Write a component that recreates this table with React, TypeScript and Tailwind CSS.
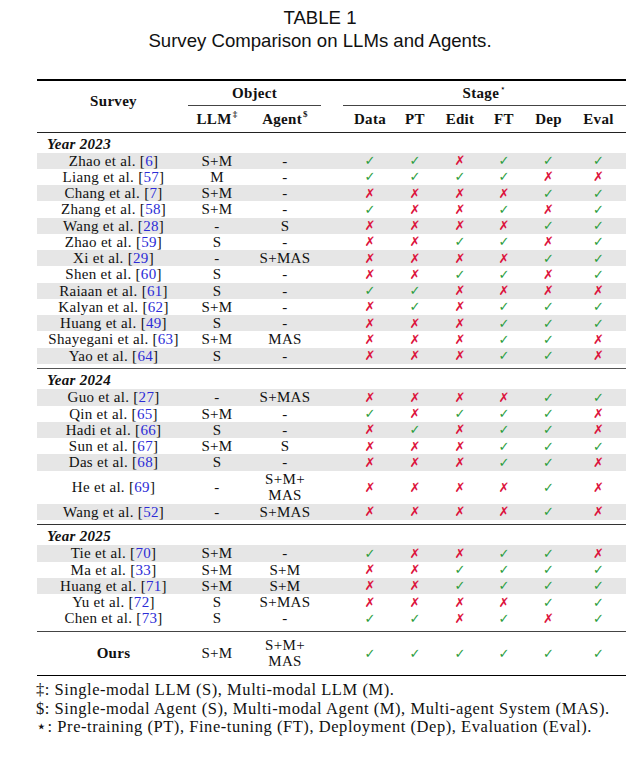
import React from "react";

type Row = {
  name: string;
  ref: string;
  llm: string;
  agent: string[];
  s: string;
  shade: boolean;
  tall?: boolean;
};

const COLS = "grid grid-cols-[153px_54px_82px_22px_44px_46px_44px_44px_45px_55px]";

const y2023: Row[] = [
  { name: "Zhao et al.", ref: "6", llm: "S+M", agent: ["-"], s: "110111", shade: true },
  { name: "Liang et al.", ref: "57", llm: "M", agent: ["-"], s: "111100", shade: false },
  { name: "Chang et al.", ref: "7", llm: "S+M", agent: ["-"], s: "000011", shade: true },
  { name: "Zhang et al.", ref: "58", llm: "S+M", agent: ["-"], s: "100101", shade: false },
  { name: "Wang et al.", ref: "28", llm: "-", agent: ["S"], s: "000011", shade: true },
  { name: "Zhao et al.", ref: "59", llm: "S", agent: ["-"], s: "001101", shade: false },
  { name: "Xi et al.", ref: "29", llm: "-", agent: ["S+MAS"], s: "000011", shade: true },
  { name: "Shen et al.", ref: "60", llm: "S", agent: ["-"], s: "001101", shade: false },
  { name: "Raiaan et al.", ref: "61", llm: "S", agent: ["-"], s: "110000", shade: true },
  { name: "Kalyan et al.", ref: "62", llm: "S+M", agent: ["-"], s: "010111", shade: false },
  { name: "Huang et al.", ref: "49", llm: "S", agent: ["-"], s: "000111", shade: true },
  { name: "Shayegani et al.", ref: "63", llm: "S+M", agent: ["MAS"], s: "000110", shade: false },
  { name: "Yao et al.", ref: "64", llm: "S", agent: ["-"], s: "000110", shade: true },
];

const y2024: Row[] = [
  { name: "Guo et al.", ref: "27", llm: "-", agent: ["S+MAS"], s: "000011", shade: true },
  { name: "Qin et al.", ref: "65", llm: "S+M", agent: ["-"], s: "101110", shade: false },
  { name: "Hadi et al.", ref: "66", llm: "S", agent: ["-"], s: "010110", shade: true },
  { name: "Sun et al.", ref: "67", llm: "S+M", agent: ["S"], s: "000111", shade: false },
  { name: "Das et al.", ref: "68", llm: "S", agent: ["-"], s: "000110", shade: true },
  { name: "He et al.", ref: "69", llm: "-", agent: ["S+M+", "MAS"], s: "000010", shade: false, tall: true },
  { name: "Wang et al.", ref: "52", llm: "-", agent: ["S+MAS"], s: "000010", shade: true },
];

const y2025: Row[] = [
  { name: "Tie et al.", ref: "70", llm: "S+M", agent: ["-"], s: "100110", shade: true },
  { name: "Ma et al.", ref: "33", llm: "S+M", agent: ["S+M"], s: "001111", shade: false },
  { name: "Huang et al.", ref: "71", llm: "S+M", agent: ["S+M"], s: "001111", shade: true },
  { name: "Yu et al.", ref: "72", llm: "S", agent: ["S+MAS"], s: "000011", shade: false },
  { name: "Chen et al.", ref: "73", llm: "S", agent: ["-"], s: "110101", shade: false },
];

function Mark({ ok }: { ok: boolean }) {
  return ok ? (
    <span className="text-[13px] leading-none tracking-normal text-[#2a9d3c] [font-family:'DejaVu_Sans',sans-serif]">✓</span>
  ) : (
    <span className="text-[13px] leading-none tracking-normal text-[#dc123c] [font-family:'DejaVu_Sans',sans-serif]">✗</span>
  );
}

function DataRow({ r }: { r: Row }) {
  return (
    <div
      className={`${COLS} ${r.tall ? "h-[33px]" : "h-[16.25px]"} ${r.shade ? "bg-[#e6e6e6]" : ""} items-center`}
    >
      <div className="text-center whitespace-nowrap">
        {r.name} [<span className="text-[#2c2cd6]">{r.ref}</span>]
      </div>
      <div className="text-center">{r.llm}</div>
      <div className="text-center flex flex-col">
        {r.agent.map((a, i) => (
          <span key={i}>{a}</span>
        ))}
      </div>
      <div />
      {r.s.split("").map((c, i) => (
        <div key={i} className="flex justify-center">
          <Mark ok={c === "1"} />
        </div>
      ))}
    </div>
  );
}

function Section({ year, rows }: { year: string; rows: Row[] }) {
  return (
    <div>
      <div className="h-[20px] pt-[3px] pl-[10px] font-bold italic leading-[16px]">Year {year}</div>
      {rows.map((r, i) => (
        <DataRow key={i} r={r} />
      ))}
      <div className="h-[4px]" />
    </div>
  );
}

export default function App() {
  return (
    <div className="w-[640px] h-[776px] bg-white text-[#111] overflow-hidden">
      <div className="pt-[6px] text-center text-[18.6px] leading-[23px] text-[#111] [font-family:'Liberation_Sans',Arial,sans-serif]">
        <div>TABLE 1</div>
        <div>Survey Comparison on LLMs and Agents.</div>
      </div>
      <div className="ml-[37px] mt-[27px] w-[589px] text-[15px] leading-[16px] tracking-[0.3px] [font-family:'Liberation_Serif','Times_New_Roman',serif]">
        <div className="h-[1.5px] bg-black" />
        <div className={`${COLS} grid-rows-[25px_26px] font-bold`}>
          <div className="row-span-2 text-center pt-[12px] leading-[16px]">Survey</div>
          <div className="col-span-2 -ml-[2px] mr-[5px] flex items-center justify-center border-b border-[#444]">
            Object
          </div>
          <div className="col-start-4 col-span-7 ml-[17px] flex items-center justify-center border-b border-[#444]">
            Stage<sup className="text-[9px] font-normal ml-[1px]">⋆</sup>
          </div>
          <div className="col-start-2 flex items-center justify-center">
            LLM<sup className="text-[9px] ml-[1px]">‡</sup>
          </div>
          <div className="flex items-center justify-center">
            Agent<sup className="text-[9px] ml-[1px]">$</sup>
          </div>
          <div className="col-start-5 flex items-center justify-center">Data</div>
          <div className="flex items-center justify-center">PT</div>
          <div className="flex items-center justify-center">Edit</div>
          <div className="flex items-center justify-center">FT</div>
          <div className="flex items-center justify-center">Dep</div>
          <div className="flex items-center justify-center">Eval</div>
        </div>
        <div className="h-[1px] bg-[#222]" />
        <Section year="2023" rows={y2023} />
        <div className="h-[1.5px] bg-[#555]" />
        <Section year="2024" rows={y2024} />
        <div className="h-[1.5px] bg-[#333]" />
        <Section year="2025" rows={y2025} />
        <div className="h-[1px] bg-[#444]" />
        <div className={`${COLS} h-[43px] items-center`}>
          <div className="text-center font-bold">Ours</div>
          <div className="text-center">S+M</div>
          <div className="text-center flex flex-col">
            <span>S+M+</span>
            <span>MAS</span>
          </div>
          <div />
          {[0, 1, 2, 3, 4, 5].map((i) => (
            <div key={i} className="flex justify-center">
              <Mark ok={true} />
            </div>
          ))}
        </div>
        <div className="h-[1.5px] bg-black" />
        <div className="mt-[5px] -ml-[1px] text-[16.5px] leading-[18.5px] tracking-[0.55px] whitespace-nowrap">
          <div>‡: Single-modal LLM (S), Multi-modal LLM (M).</div>
          <div>$: Single-modal Agent (S), Multi-modal Agent (M), Multi-agent System (MAS).</div>
          <div>⋆: Pre-training (PT), Fine-tuning (FT), Deployment (Dep), Evaluation (Eval).</div>
        </div>
      </div>
    </div>
  );
}
